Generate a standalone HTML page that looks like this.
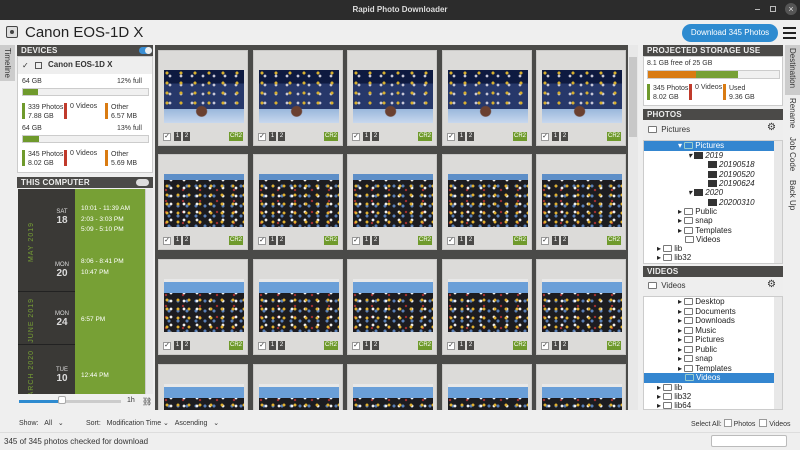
<!DOCTYPE html>
<html><head><meta charset="utf-8">
<style>
*{box-sizing:border-box;margin:0;padding:0}
body{width:800px;height:450px;overflow:hidden;background:#efefef;font-family:"Liberation Sans",sans-serif;font-size:8px;color:#333;position:relative}
.a{position:absolute}
.hdr{position:absolute;background:#4b4a48;color:#eee;font-size:8px;line-height:11px;padding-left:4px;font-weight:bold;letter-spacing:.2px}
.cell{position:absolute;width:90px;height:96px;background:#dcdbd9;border:1px solid #c9c8c6}
.img{position:absolute;left:5px;top:19px;width:80px;height:53px}
.r1{background:
radial-gradient(ellipse at 47% 78%,#6a4030 0 5px,transparent 6px),
linear-gradient(180deg,transparent 74%,#9ab8dc 74%,#c8d8ee 100%),
radial-gradient(circle at 3px 3px,#d8b030 0 1.3px,transparent 1.8px) 0 0/14px 10px,
radial-gradient(circle at 6px 6px,#c8c8d8 0 1.2px,transparent 1.6px) 0 0/11px 9px,
linear-gradient(180deg,#0e1a40 0 25%,#27386a 25% 74%),#1a2040}
.r2,.r3{background:
radial-gradient(circle at 3px 3px,#e0b030 0 1.3px,transparent 1.6px) 0 0/11px 9px,
radial-gradient(circle at 7px 6px,#f0f0f0 0 1.2px,transparent 1.6px) 0 0/13px 8px,
radial-gradient(circle at 5px 2px,#5a80b8 0 1.3px,transparent 1.8px) 0 0/9px 10px,
radial-gradient(circle at 2px 5px,#a03030 0 1px,transparent 1.4px) 0 0/17px 11px,
#1c1c20}
.r2{box-shadow:inset 0 6px 0 #5e8fc8}
.r3{box-shadow:inset 0 3px 0 #e8e8e8,inset 0 14px 0 #6a9fd8}
.ck{position:absolute;left:4px;bottom:4px;width:8px;height:8px;background:#fff;border:1px solid #999;font-size:7px;line-height:6px;text-align:center}
.n{position:absolute;bottom:4px;width:7px;height:9px;background:#4b4a48;color:#fff;font-size:6px;line-height:9px;text-align:center}
.cr{position:absolute;right:4px;bottom:4px;width:14px;height:9px;background:#6f9a2c;color:#fff;font-size:6px;line-height:9px;text-align:center}
.tab{position:absolute;writing-mode:vertical-rl;font-size:8px;color:#333;white-space:nowrap}
.tree div{position:absolute;font-size:8px;line-height:10px;color:#222;white-space:nowrap}
.f{display:inline-block;width:9px;height:7px;border:1px solid #777;border-radius:1px;margin-right:2px;vertical-align:-1px;background:#fff}
.fd{display:inline-block;width:9px;height:7px;background:#333;margin-right:2px;vertical-align:-1px}
.bar{position:absolute;width:3px;height:16px}
</style></head><body>
<div class="a" style="left:0;top:0;width:800px;height:20px;background:#2c2c2c"></div>
<div class="a" style="left:0;top:5px;width:800px;text-align:center;color:#ddd;font-size:8px;font-weight:bold">Rapid Photo Downloader</div>
<div class="a" style="left:755px;top:9px;width:5px;height:1px;background:#bbb"></div>
<div class="a" style="left:770px;top:6px;width:6px;height:6px;border:1px solid #bbb"></div>
<div class="a" style="left:785px;top:3px;width:12px;height:12px;border-radius:6px;background:#555;color:#ddd;font-size:9px;line-height:12px;text-align:center">×</div>
<div class="a" style="left:6px;top:26px;width:12px;height:12px;border:1px solid #444;border-radius:2px;background:#ddd"><div class="a" style="left:3px;top:3px;width:4px;height:4px;border-radius:2px;background:#444"></div></div>
<div class="a" style="left:25px;top:24px;font-size:15px;color:#222">Canon EOS-1D X</div>
<div class="a" style="left:682px;top:24px;width:96px;height:18px;border-radius:9px;background:#2e8bd0;color:#fff;font-size:8px;line-height:18px;text-align:center">Download 345 Photos</div>
<div class="a" style="left:783px;top:27px;width:13px;height:2px;background:#222;box-shadow:0 5px 0 #222,0 10px 0 #222"></div>
<div class="a" style="left:0;top:45px;width:15px;height:36px;background:#ccc"></div>
<div class="tab" style="left:3px;top:48px">Timeline</div>
<div class="hdr" style="left:17px;top:45px;width:136px">DEVICES</div>
<div class="a" style="left:139px;top:47px;width:13px;height:7px;border-radius:4px;background:#3a8fd4"><div class="a" style="right:0;top:0;width:7px;height:7px;border-radius:4px;background:#eee"></div></div>
<div class="a" style="left:17px;top:56px;width:136px;height:117px;background:#fff;border:1px solid #ccc"></div>
<div class="a" style="left:18px;top:57px;width:134px;height:17px;background:#eee"></div>
<div class="a" style="left:22px;top:61px;font-size:8px">✓</div>
<div class="a" style="left:35px;top:62px;width:7px;height:7px;border:1px solid #555"></div>
<div class="a" style="left:48px;top:60px;font-size:8px;font-weight:bold">Canon EOS-1D X</div>
<div class="a" style="left:22px;top:78px;font-size:7px">64 GB</div>
<div class="a" style="left:117px;top:78px;font-size:7px">12% full</div>
<div class="a" style="left:22px;top:88px;width:127px;height:8px;border:1px solid #ccc;background:#f0f0f0"><div style="width:15px;height:6px;background:#6f9a2c"></div></div>
<div class="bar" style="left:22px;top:103px;background:#6f9a2c"></div><div class="a" style="left:28px;top:103px;font-size:7px;line-height:9px">339 Photos<br>7.88 GB</div>
<div class="bar" style="left:64px;top:103px;background:#c03a2b"></div><div class="a" style="left:70px;top:103px;font-size:7px">0 Videos</div>
<div class="bar" style="left:105px;top:103px;background:#d97b12"></div><div class="a" style="left:111px;top:103px;font-size:7px;line-height:9px">Other<br>6.57 MB</div>
<div class="a" style="left:22px;top:125px;font-size:7px">64 GB</div>
<div class="a" style="left:117px;top:125px;font-size:7px">13% full</div>
<div class="a" style="left:22px;top:135px;width:127px;height:8px;border:1px solid #ccc;background:#f0f0f0"><div style="width:16px;height:6px;background:#6f9a2c"></div></div>
<div class="bar" style="left:22px;top:150px;background:#6f9a2c"></div><div class="a" style="left:28px;top:150px;font-size:7px;line-height:9px">345 Photos<br>8.02 GB</div>
<div class="bar" style="left:64px;top:150px;background:#c03a2b"></div><div class="a" style="left:70px;top:150px;font-size:7px">0 Videos</div>
<div class="bar" style="left:105px;top:150px;background:#d97b12"></div><div class="a" style="left:111px;top:150px;font-size:7px;line-height:9px">Other<br>5.69 MB</div>
<div class="hdr" style="left:17px;top:177px;width:136px">THIS COMPUTER</div>
<div class="a" style="left:136px;top:179px;width:13px;height:7px;border-radius:4px;background:#ddd"></div>
<div class="a" style="left:18px;top:189px;width:57px;height:205px;background:#3a3936"></div>
<div class="a" style="left:75px;top:189px;width:70px;height:205px;background:#77a035"></div>
<div class="a" style="left:145px;top:189px;width:8px;height:205px;background:#e8e8e8;border-left:1px solid #ccc"></div>
<div class="a" style="left:18px;top:291px;width:57px;height:1px;background:#222"></div>
<div class="a" style="left:18px;top:344px;width:57px;height:1px;background:#222"></div>
<div class="tab" style="left:28px;top:222px;color:#77a035;font-size:7px;letter-spacing:1px;transform:rotate(180deg)">MAY 2019</div>
<div class="tab" style="left:28px;top:298px;color:#77a035;font-size:7px;letter-spacing:1px;transform:rotate(180deg)">JUNE 2019</div>
<div class="a" style="left:18px;top:346px;width:25px;height:48px;overflow:hidden"><div class="tab" style="left:10px;top:4px;color:#77a035;font-size:7px;letter-spacing:1px;transform:rotate(180deg)">MARCH 2020</div></div>
<div class="a" style="left:52px;top:209px;color:#ddd;font-size:6px;text-align:center;width:20px">SAT<br><b style="font-size:10px">18</b></div>
<div class="a" style="left:52px;top:262px;color:#ddd;font-size:6px;text-align:center;width:20px">MON<br><b style="font-size:10px">20</b></div>
<div class="a" style="left:52px;top:311px;color:#ddd;font-size:6px;text-align:center;width:20px">MON<br><b style="font-size:10px">24</b></div>
<div class="a" style="left:52px;top:367px;color:#ddd;font-size:6px;text-align:center;width:20px">TUE<br><b style="font-size:10px">10</b></div>
<div class="a" style="left:81px;top:204px;color:#fff;font-size:6.5px;line-height:10.5px">10:01 - 11:39 AM<br>2:03 - 3:03 PM<br>5:09 - 5:10 PM</div>
<div class="a" style="left:81px;top:257px;color:#fff;font-size:6.5px;line-height:10.5px">8:06 - 8:41 PM<br>10:47 PM</div>
<div class="a" style="left:81px;top:316px;color:#fff;font-size:6.5px">6:57 PM</div>
<div class="a" style="left:81px;top:372px;color:#fff;font-size:6.5px">12:44 PM</div>
<div class="a" style="left:19px;top:400px;width:102px;height:3px;background:#ccc"><div style="width:43px;height:3px;background:#2e8bd0"></div></div>
<div class="a" style="left:58px;top:396px;width:8px;height:8px;border-radius:2px;background:#fff;border:1px solid #aaa"></div>
<div class="a" style="left:127px;top:397px;font-size:7px">1h</div>
<div class="a" style="left:142px;top:397px;font-size:8px">⛓</div>
<div class="a" style="left:155px;top:45px;width:483px;height:365px;background:#4a4a48;overflow:hidden">
<div class="a" style="left:473px;top:0;width:10px;height:365px;background:#e8e8e8"></div>
<div class="a" style="left:474px;top:12px;width:8px;height:80px;background:#c8c8c8"></div>
<div class="cell" style="left:3px;top:5px"><div class="img r1"></div><div class="ck">✓</div><div class="n" style="left:15px">1</div><div class="n" style="left:24px">2</div><div class="cr">CR2</div></div>
<div class="cell" style="left:98px;top:5px"><div class="img r1"></div><div class="ck">✓</div><div class="n" style="left:15px">1</div><div class="n" style="left:24px">2</div><div class="cr">CR2</div></div>
<div class="cell" style="left:192px;top:5px"><div class="img r1"></div><div class="ck">✓</div><div class="n" style="left:15px">1</div><div class="n" style="left:24px">2</div><div class="cr">CR2</div></div>
<div class="cell" style="left:287px;top:5px"><div class="img r1"></div><div class="ck">✓</div><div class="n" style="left:15px">1</div><div class="n" style="left:24px">2</div><div class="cr">CR2</div></div>
<div class="cell" style="left:381px;top:5px"><div class="img r1"></div><div class="ck">✓</div><div class="n" style="left:15px">1</div><div class="n" style="left:24px">2</div><div class="cr">CR2</div></div>
<div class="cell" style="left:3px;top:109px"><div class="img r2"></div><div class="ck">✓</div><div class="n" style="left:15px">1</div><div class="n" style="left:24px">2</div><div class="cr">CR2</div></div>
<div class="cell" style="left:98px;top:109px"><div class="img r2"></div><div class="ck">✓</div><div class="n" style="left:15px">1</div><div class="n" style="left:24px">2</div><div class="cr">CR2</div></div>
<div class="cell" style="left:192px;top:109px"><div class="img r2"></div><div class="ck">✓</div><div class="n" style="left:15px">1</div><div class="n" style="left:24px">2</div><div class="cr">CR2</div></div>
<div class="cell" style="left:287px;top:109px"><div class="img r2"></div><div class="ck">✓</div><div class="n" style="left:15px">1</div><div class="n" style="left:24px">2</div><div class="cr">CR2</div></div>
<div class="cell" style="left:381px;top:109px"><div class="img r2"></div><div class="ck">✓</div><div class="n" style="left:15px">1</div><div class="n" style="left:24px">2</div><div class="cr">CR2</div></div>
<div class="cell" style="left:3px;top:214px"><div class="img r3"></div><div class="ck">✓</div><div class="n" style="left:15px">1</div><div class="n" style="left:24px">2</div><div class="cr">CR2</div></div>
<div class="cell" style="left:98px;top:214px"><div class="img r3"></div><div class="ck">✓</div><div class="n" style="left:15px">1</div><div class="n" style="left:24px">2</div><div class="cr">CR2</div></div>
<div class="cell" style="left:192px;top:214px"><div class="img r3"></div><div class="ck">✓</div><div class="n" style="left:15px">1</div><div class="n" style="left:24px">2</div><div class="cr">CR2</div></div>
<div class="cell" style="left:287px;top:214px"><div class="img r3"></div><div class="ck">✓</div><div class="n" style="left:15px">1</div><div class="n" style="left:24px">2</div><div class="cr">CR2</div></div>
<div class="cell" style="left:381px;top:214px"><div class="img r3"></div><div class="ck">✓</div><div class="n" style="left:15px">1</div><div class="n" style="left:24px">2</div><div class="cr">CR2</div></div>
<div class="cell" style="left:3px;top:319px"><div class="img r3"></div></div>
<div class="cell" style="left:98px;top:319px"><div class="img r3"></div></div>
<div class="cell" style="left:192px;top:319px"><div class="img r3"></div></div>
<div class="cell" style="left:287px;top:319px"><div class="img r3"></div></div>
<div class="cell" style="left:381px;top:319px"><div class="img r3"></div></div>
</div>
<div class="hdr" style="left:643px;top:45px;width:140px">PROJECTED STORAGE USE</div>
<div class="a" style="left:643px;top:56px;width:140px;height:50px;background:#fff;border:1px solid #ccc"></div>
<div class="a" style="left:647px;top:60px;font-size:7px">8.1 GB free of 25 GB</div>
<div class="a" style="left:647px;top:70px;width:133px;height:9px;background:#f0f0f0;border:1px solid #ccc"><div class="a" style="left:0;top:0;width:48px;height:7px;background:#d97b12"></div><div class="a" style="left:48px;top:0;width:42px;height:7px;background:#77a035"></div></div>
<div class="bar" style="left:647px;top:84px;background:#6f9a2c"></div><div class="a" style="left:653px;top:84px;font-size:7px;line-height:9px">345 Photos<br>8.02 GB</div>
<div class="bar" style="left:689px;top:84px;background:#c03a2b"></div><div class="a" style="left:695px;top:84px;font-size:7px">0 Videos</div>
<div class="bar" style="left:723px;top:84px;background:#d97b12"></div><div class="a" style="left:729px;top:84px;font-size:7px;line-height:9px">Used<br>9.36 GB</div>
<div class="hdr" style="left:643px;top:109px;width:140px">PHOTOS</div>
<div class="a" style="left:643px;top:120px;width:140px;height:20px;background:#eee"></div>
<div class="a" style="left:648px;top:125px;font-size:8px"><span class="f"></span> Pictures</div>
<div class="a" style="left:767px;top:122px;font-size:10px">⚙</div>
<div class="a" style="left:643px;top:140px;width:140px;height:124px;background:#fff;border:1px solid #ccc"></div>
<div class="a" style="left:774px;top:141px;width:8px;height:122px;background:#e8e8e8"></div>
<div class="a" style="left:644px;top:141px;width:130px;height:10px;background:#3486d0"></div>
<div class="tree">
<div style="left:678px;top:141px;color:#fff">▾ <span class="f" style="background:#3486d0;border-color:#9cc"></span>Pictures</div>
<div style="left:688px;top:151px;font-style:italic">▾ <span class="fd"></span>2019</div>
<div style="left:708px;top:160px;font-style:italic"><span class="fd"></span>20190518</div>
<div style="left:708px;top:170px;font-style:italic"><span class="fd"></span>20190520</div>
<div style="left:708px;top:179px;font-style:italic"><span class="fd"></span>20190624</div>
<div style="left:688px;top:188px;font-style:italic">▾ <span class="fd"></span>2020</div>
<div style="left:708px;top:198px;font-style:italic"><span class="fd"></span>20200310</div>
<div style="left:678px;top:207px">▸ <span class="f"></span>Public</div>
<div style="left:678px;top:216px">▸ <span class="f"></span>snap</div>
<div style="left:678px;top:226px">▸ <span class="f"></span>Templates</div>
<div style="left:685px;top:235px"><span class="f"></span>Videos</div>
<div style="left:657px;top:244px">▸ <span class="f"></span>lib</div>
<div style="left:657px;top:253px">▸ <span class="f"></span>lib32</div>
</div>
<div class="hdr" style="left:643px;top:266px;width:140px">VIDEOS</div>
<div class="a" style="left:643px;top:277px;width:140px;height:19px;background:#eee"></div>
<div class="a" style="left:648px;top:281px;font-size:8px"><span class="f"></span> Videos</div>
<div class="a" style="left:767px;top:279px;font-size:10px">⚙</div>
<div class="a" style="left:643px;top:296px;width:140px;height:114px;background:#fff;border:1px solid #ccc"></div>
<div class="a" style="left:774px;top:297px;width:8px;height:112px;background:#e8e8e8"></div>
<div class="a" style="left:644px;top:373px;width:130px;height:10px;background:#3486d0"></div>
<div class="tree">
<div style="left:678px;top:297px">▸ <span class="f"></span>Desktop</div>
<div style="left:678px;top:307px">▸ <span class="f"></span>Documents</div>
<div style="left:678px;top:316px">▸ <span class="f"></span>Downloads</div>
<div style="left:678px;top:326px">▸ <span class="f"></span>Music</div>
<div style="left:678px;top:335px">▸ <span class="f"></span>Pictures</div>
<div style="left:678px;top:345px">▸ <span class="f"></span>Public</div>
<div style="left:678px;top:354px">▸ <span class="f"></span>snap</div>
<div style="left:678px;top:364px">▸ <span class="f"></span>Templates</div>
<div style="left:685px;top:373px;color:#fff"><span class="f" style="background:#3486d0;border-color:#9cc"></span>Videos</div>
<div style="left:657px;top:383px">▸ <span class="f"></span>lib</div>
<div style="left:657px;top:392px">▸ <span class="f"></span>lib32</div>
<div style="left:657px;top:401px">▸ <span class="f"></span>lib64</div>
</div>
<div class="a" style="left:785px;top:45px;width:15px;height:50px;background:#ccc"></div>
<div class="tab" style="left:788px;top:48px">Destination</div>
<div class="tab" style="left:788px;top:98px">Rename</div>
<div class="tab" style="left:788px;top:137px">Job Code</div>
<div class="tab" style="left:788px;top:180px">Back Up</div>
<div class="a" style="left:19px;top:419px;font-size:7px">Show:&nbsp;&nbsp;&nbsp;All&nbsp;&nbsp;&nbsp;⌄</div>
<div class="a" style="left:86px;top:419px;font-size:7px">Sort:&nbsp;&nbsp;&nbsp;Modification Time ⌄&nbsp;&nbsp;&nbsp;Ascending&nbsp;&nbsp;&nbsp;⌄</div>
<div class="a" style="left:691px;top:419px;font-size:7px">Select All: <span style="display:inline-block;width:8px;height:8px;border:1px solid #999;background:#fff;vertical-align:-1px"></span> Photos&nbsp; <span style="display:inline-block;width:8px;height:8px;border:1px solid #999;background:#fff;vertical-align:-1px"></span> Videos</div>
<div class="a" style="left:0;top:432px;width:800px;height:1px;background:#ddd"></div>
<div class="a" style="left:4px;top:437px;font-size:8px">345 of 345 photos checked for download</div>
<div class="a" style="left:711px;top:435px;width:76px;height:12px;background:#fff;border:1px solid #bbb;border-radius:2px"></div>
</body></html>
